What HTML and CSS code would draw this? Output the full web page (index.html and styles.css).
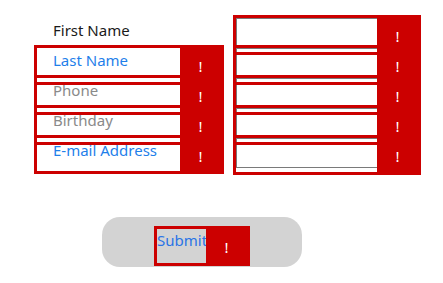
FILE: index.html
```html
<!DOCTYPE html>
<html>
<head>
<meta charset="utf-8">
<link rel="stylesheet" href="styles.css">
</head>
<body>
<div class="page">
  <div class="form">
    <div class="col labels">
      <div class="label dark">First Name</div>
      <div class="label blue">Last Name</div>
      <div class="label gray">Phone</div>
      <div class="label gray">Birthday</div>
      <div class="label blue">E-mail Address</div>
      <div class="adorner adorner-left">
        <div class="bars">
          <div class="slot"></div><div class="sep"></div>
          <div class="slot"></div><div class="sep"></div>
          <div class="slot"></div><div class="sep"></div>
          <div class="slot"></div>
        </div>
        <div class="bang"><span>!</span><span>!</span><span>!</span><span>!</span></div>
      </div>
    </div>
    <div class="col inputs">
      <div class="textbox"></div>
      <div class="textbox"></div>
      <div class="textbox"></div>
      <div class="textbox"></div>
      <div class="textbox"></div>
      <div class="adorner adorner-right">
        <div class="bars">
          <div class="slot"></div><div class="sep"></div>
          <div class="slot"></div><div class="sep"></div>
          <div class="slot"></div><div class="sep"></div>
          <div class="slot"></div><div class="sep"></div>
          <div class="slot"></div>
        </div>
        <div class="bang"><span>!</span><span>!</span><span>!</span><span>!</span><span>!</span></div>
      </div>
    </div>
  </div>
  <div class="actions">
    <div class="btn">
      <div class="adorner-inline">
        <span class="btn-label">Submit</span>
        <div class="bang"><span>!</span></div>
      </div>
    </div>
  </div>
</div>
</body>
</html>
```
FILE: styles.css
```css
body {
  margin: 0;
  background: #fff;
  font-family: "Noto Sans", "Open Sans", sans-serif;
  font-size: 15px;
}
.page {
  padding: 15px 0 0 34px;
}
.form {
  display: flex;
  align-items: flex-start;
}
.col {
  position: relative;
  box-sizing: border-box;
}
.labels {
  width: 199px;
  padding-left: 19px;
}
.label {
  height: 30px;
  line-height: 30px;
  white-space: nowrap;
}
.dark { color: #1a1a1a; }
.blue { color: #1f7fea; }
.gray { color: #8a8a8a; }
.inputs {
  width: 188px;
  height: 160px;
  padding: 3px 0 0 3px;
}
.textbox {
  width: 160px;
  height: 30px;
  border: 1px solid #7a7a7a;
  box-sizing: border-box;
  background: #fff;
}
.adorner {
  position: absolute;
  left: 0;
  display: flex;
  border: 3px solid #cc0000;
  box-sizing: border-box;
}
.adorner-left {
  top: 30px;
  width: 190px;
  height: 129px;
}
.adorner-right {
  top: 0;
  width: 188px;
  height: 160px;
}
.bars {
  flex: 1;
  display: flex;
  flex-direction: column;
}
.slot {
  height: 20px;
}
.slot:first-child,
.slot:last-child {
  flex: 1;
}
.sep {
  height: 4px;
  border-top: 3px solid #cc0000;
  border-bottom: 3px solid #cc0000;
}
.bang {
  width: 41px;
  background: #cc0000;
  color: #fff;
  padding-top: 3px;
  box-sizing: border-box;
  text-align: center;
  line-height: 30px;
}
.bang span {
  display: block;
  height: 30px;
}
.actions {
  margin-top: 42px;
  padding-left: 68px;
}
.btn {
  width: 200px;
  height: 50px;
  border-radius: 18px;
  background: #d3d3d3;
  box-sizing: border-box;
  padding: 9px 0 0 52px;
  display: flex;
  align-items: flex-start;
}
.adorner-inline {
  display: flex;
  border: 3px solid #cc0000;
}
.btn-label {
  width: 49px;
  height: 34px;
  box-sizing: border-box;
  padding-top: 1px;
  line-height: 20px;
  color: #2a74e6;
  white-space: nowrap;
}
.adorner-inline .bang {
  height: 34px;
}
```
